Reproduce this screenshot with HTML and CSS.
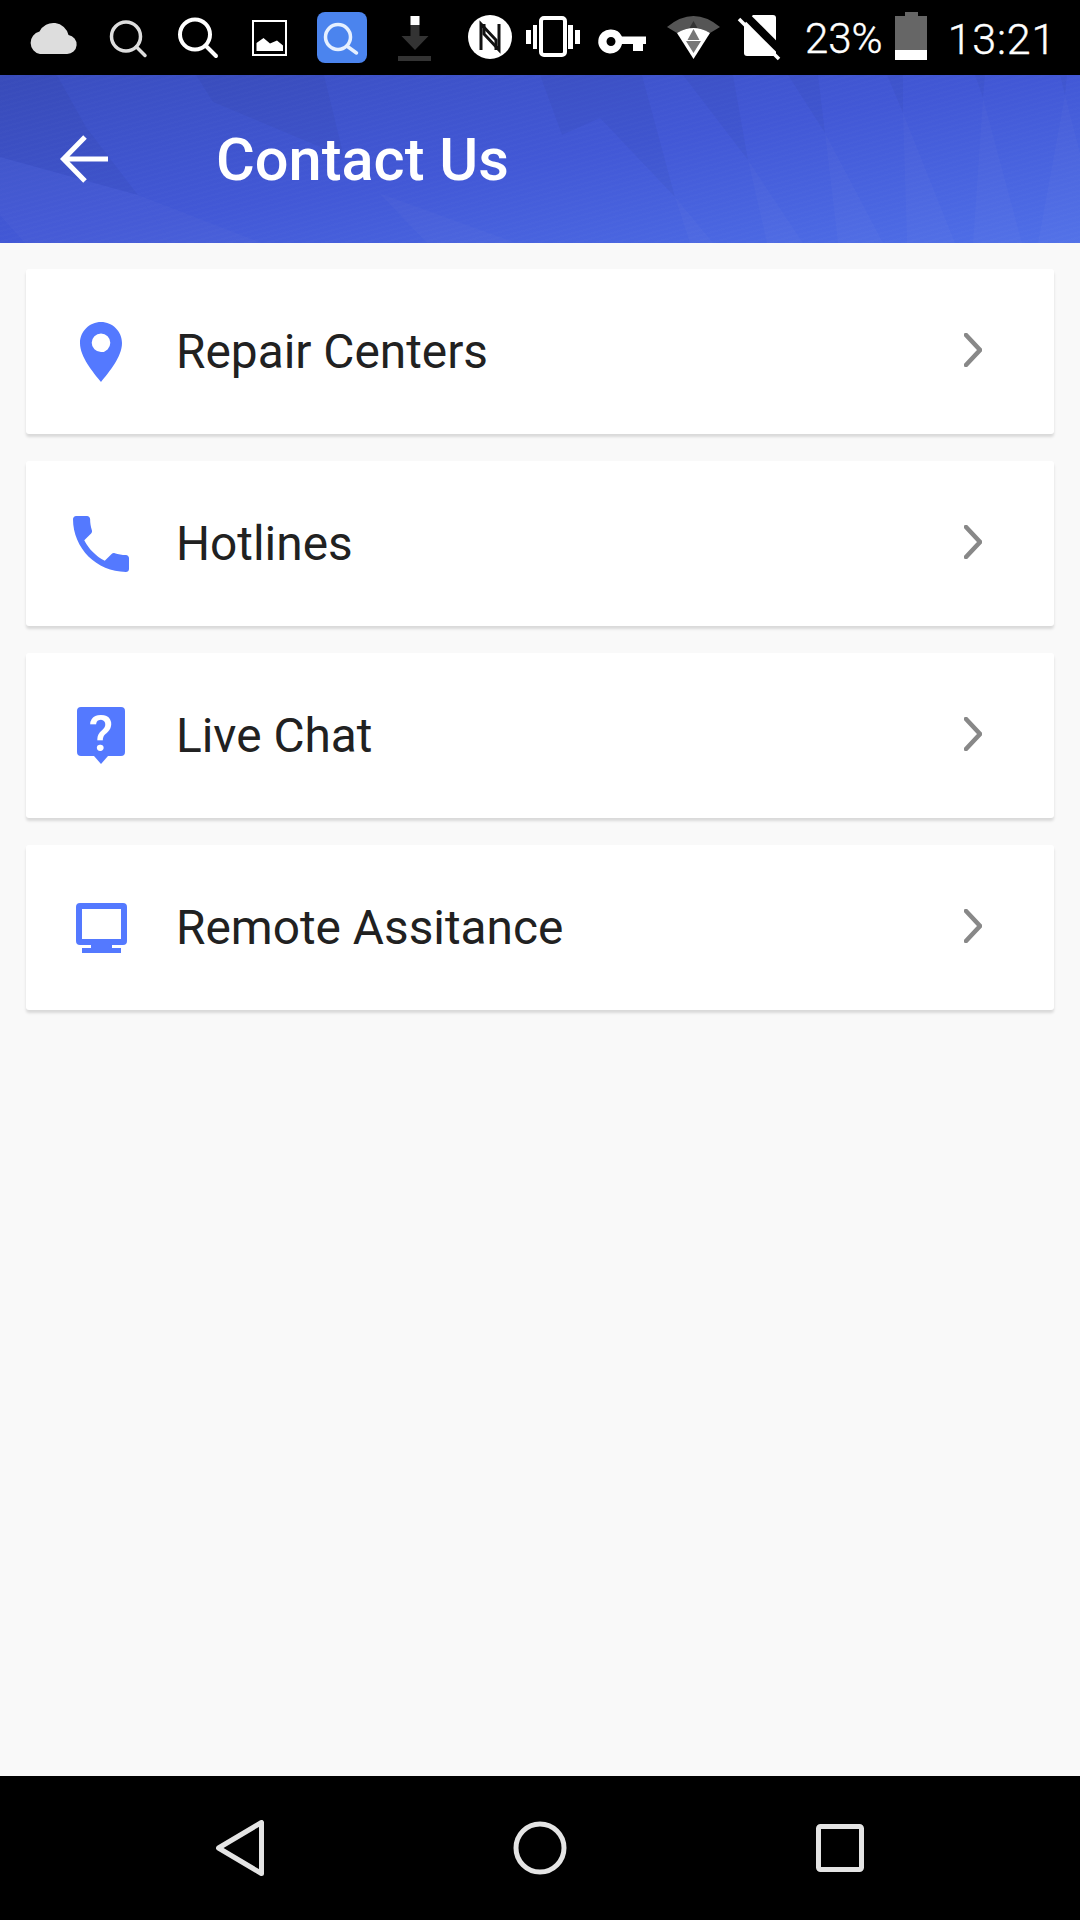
FILE: index.html
```html
<!DOCTYPE html>
<html lang="en">
<head>
<meta charset="utf-8">
<title>Contact Us</title>
<link rel="stylesheet" href="styles.css">
</head>
<body>
<div class="app">
  <div class="status-bar">
    <svg class="status-icons" width="800" height="75" viewBox="0 0 800 75" aria-hidden="true">
      <path fill="#ddd" d="M40 54h27a9.500 9.500 0 0 0 1.500-18.900A15.500 15.500 0 0 0 39.500 31.500 11.500 11.500 0 0 0 40 54z"/>
      <g fill="none" stroke="#ddd" stroke-width="3.500" stroke-linecap="round">
        <circle cx="126" cy="36.500" r="14.500"/><path d="M136.500 47l8.500 8.500"/>
      </g>
      <g fill="none" stroke="#fff" stroke-width="4" stroke-linecap="round">
        <circle cx="195" cy="34.500" r="15"/><path d="M206 46l10 10"/>
      </g>
      <rect x="253" y="21" width="33" height="34" fill="none" stroke="#fff" stroke-width="2"/>
      <path fill="#fff" d="M256.500 43l7-5 6.500 5.500 7-3 6 5v5.500h-26.500z"/>
      <rect x="317" y="12" width="50" height="51" rx="8" fill="#4b84ee"/>
      <g fill="none" stroke="#e6f0ff" stroke-width="3.500" stroke-linecap="round">
        <circle cx="338" cy="37" r="12.500"/><path d="M347.500 46.500l9 6.500"/>
      </g>
      <rect x="410.500" y="16" width="9" height="9" fill="#fff"/>
      <path fill="#333" d="M410.500 25h9v11h9l-13.500 14-13.500-14h9zM398 56h33v5h-33z"/>
      <circle cx="490" cy="37" r="22" fill="#fff"/>
      <g fill="none" stroke="#111" stroke-width="3">
        <path d="M481 50V24l15 16v10"/>
        <path d="M499 24v26L484 34V24"/>
      </g>
      <path fill="#fff" d="M526 30h5v14h-5zM533 25h4v24h-4zM568 25h5v24h-5zM575 30h5v14h-5z"/>
      <rect x="541" y="18" width="24" height="37" rx="3" fill="none" stroke="#fff" stroke-width="4"/>
      <path fill="#fff" fill-rule="evenodd" d="M611 29.500a12 12 0 0 1 11 7H646v7.500h-3v7h-10v-7h-11a12 12 0 1 1-11-14.500zm0 7.500a4.500 4.500 0 1 0 0 9 4.500 4.500 0 0 0 0-9z"/>
      <path fill="#555" d="M667 27Q693.500 5 720 27L710 33Q693.500 23 677 33z"/>
      <path fill="#fff" d="M677 33Q693.500 23 710 33L693.500 59z"/>
      <path fill="#777" d="M693.500 29l6 11h-12zM686 41h15l-7.500 12z"/>
      <path fill="#333" d="M693.500 21l4 7h-8z"/>
      <path fill="#fff" d="M753 15h20a3 3 0 0 1 3 3v35a3 3 0 0 1-3 3h-26a3 3 0 0 1-3-3V24z"/>
      <path stroke="#000" stroke-width="8" d="M744 14l40 40"/>
      <path stroke="#fff" stroke-width="3.500" d="M739 19l40 40"/>
    </svg>
    <span class="status-percent">23%</span>
    <svg class="battery" width="32" height="48" viewBox="0 0 32 48" aria-hidden="true">
      <path fill="#666" d="M10 0h13v4h9v34H0V4h10z"/>
      <rect y="38" width="32" height="10" fill="#fff"/>
    </svg>
    <span class="status-time">13:21</span>
  </div>

  <header class="app-header">
    <svg class="header-art" width="1080" height="168" viewBox="0 0 1080 168" aria-hidden="true">
      <g fill="#fff" fill-opacity=".025">
        <path d="M0 82L138 120 172 168H25L0 140z"/>
        <path d="M138 120L172 168H262z"/>
        <path d="M379 118L427 168H516z"/>
        <path d="M675 122L690 168H713z"/>
        <path d="M748 85L767 168H803z"/>
        <path d="M825 58L838 168H883z"/>
        <path d="M903 38L907 168H955z"/>
        <path d="M983 23L973 168H1022z"/>
        <path d="M1065 20L1038 168H1080V78z"/>
      </g>
      <g fill="#000" fill-opacity=".03">
        <path d="M0 0H57L86 52 138 120 0 82z"/>
        <path d="M196 0H324L344 82 213 27z"/>
        <path d="M540 0H642L675 122 600 43 562 60z"/>
        <path d="M683 0H733L748 85z"/>
        <path d="M788 0H818L825 58z"/>
        <path d="M887 0H903V38z"/>
        <path d="M975 0H985L983 23z"/>
        <path d="M1060 0H1067L1065 20z"/>
      </g>
    </svg>
    <button class="back-button" type="button" aria-label="Back">
      <svg width="48" height="48" viewBox="0 0 48 48" aria-hidden="true">
        <path fill="none" stroke="#fff" stroke-width="5" d="M48 24H4M25 2L3.500 24 25 46"/>
      </svg>
    </button>
    <h1 class="app-title">Contact Us</h1>
  </header>

  <main class="content">
    <a class="card">
      <svg class="card-icon" width="56" height="60" viewBox="0 0 56 60" aria-hidden="true">
        <path fill="#5479ff" fill-rule="evenodd" d="M28 0C16.400 0 7 9.400 7 21c0 14 13 29 21 39 8-10 21-25 21-39C49 9.400 39.600 0 28 0zm0 11.500a9.300 9.300 0 1 1 0 18.600 9.300 9.300 0 0 1 0-18.600z"/>
      </svg>
      <span class="card-label">Repair Centers</span>
      <svg class="chevron" width="18" height="34" viewBox="0 0 18 34" aria-hidden="true"><path d="M2 2l14 15L2 32"/></svg>
    </a>
    <a class="card">
      <svg class="card-icon" width="56" height="58" viewBox="3 3 18 18" aria-hidden="true">
        <path fill="#5479ff" d="M6.620 10.790c1.440 2.830 3.760 5.140 6.590 6.590l2.200-2.200c.27-.27.67-.36 1.020-.24 1.120.37 2.330.57 3.570.57.550 0 1 .45 1 1V20c0 .55-.45 1-1 1-9.390 0-17-7.610-17-17 0-.55.45-1 1-1h3.500c.55 0 1 .45 1 1 0 1.250.2 2.450.57 3.570.11.350.03.740-.25 1.020l-2.200 2.200z"/>
      </svg>
      <span class="card-label">Hotlines</span>
      <svg class="chevron" width="18" height="34" viewBox="0 0 18 34" aria-hidden="true"><path d="M2 2l14 15L2 32"/></svg>
    </a>
    <a class="card">
      <svg class="card-icon chat-icon" width="56" height="58" viewBox="0 0 56 58" aria-hidden="true">
        <path fill="#5479ff" d="M8 0h40a4 4 0 0 1 4 4v41a4 4 0 0 1-4 4H35l-7 8-7-8H8a4 4 0 0 1-4-4V4a4 4 0 0 1 4-4z"/>
        <text class="chat-mark" x="28" y="44" text-anchor="middle">?</text>
      </svg>
      <span class="card-label">Live Chat</span>
      <svg class="chevron" width="18" height="34" viewBox="0 0 18 34" aria-hidden="true"><path d="M2 2l14 15L2 32"/></svg>
    </a>
    <a class="card">
      <svg class="card-icon" width="56" height="50" viewBox="0 0 56 50" aria-hidden="true">
        <path fill="#5479ff" fill-rule="evenodd" d="M7 0h43a4 4 0 0 1 4 4v34a4 4 0 0 1-4 4H39v3h9v5H9v-5h9v-3H7a4 4 0 0 1-4-4V4a4 4 0 0 1 4-4zm2 6v30h39V6z"/>
      </svg>
      <span class="card-label">Remote Assitance</span>
      <svg class="chevron" width="18" height="34" viewBox="0 0 18 34" aria-hidden="true"><path d="M2 2l14 15L2 32"/></svg>
    </a>
  </main>

  <nav class="nav-bar" aria-label="System navigation">
    <svg width="48" height="56" viewBox="0 0 48 56" aria-hidden="true">
      <path class="nav-shape" d="M45.500 2.500v51L2.500 28z"/>
    </svg>
    <svg width="54" height="54" viewBox="0 0 54 54" aria-hidden="true">
      <circle class="nav-shape" cx="27" cy="27" r="24"/>
    </svg>
    <svg width="48" height="48" viewBox="0 0 48 48" aria-hidden="true">
      <rect class="nav-shape" x="2.500" y="2.500" width="43" height="43" rx="2"/>
    </svg>
  </nav>
</div>
</body>
</html>
```
FILE: styles.css
```css
* { box-sizing: border-box; }

html, body {
  margin: 0;
  padding: 0;
}

body {
  font-family: Roboto, "Liberation Sans", sans-serif;
  background: #f9f9f9;
}

.app {
  width: 1080px;
  height: 1920px;
  display: flex;
  flex-direction: column;
  overflow: hidden;
}

.status-bar {
  flex: 0 0 75px;
  display: flex;
  align-items: center;
  background: #000;
  color: #fff;
}

.status-icons {
  display: block;
  flex: 0 0 800px;
}

.status-percent,
.status-time {
  font-size: 42px;
  font-weight: 300;
  line-height: 72px;
  padding-top: 3px;
  white-space: nowrap;
  -webkit-text-stroke: .4px #fff;
}

.status-percent { margin-left: 5px; }

.battery {
  margin-left: 12px;
  margin-bottom: 3px;
}

.status-time {
  margin-left: 21px;
  font-size: 43px;
  letter-spacing: .8px;
}

.app-header {
  flex: 0 0 168px;
  position: relative;
  display: flex;
  align-items: center;
  padding-left: 60px;
  color: #fff;
  background:
    repeating-linear-gradient(165deg, rgba(255,255,255,.012) 0 2px, rgba(255,255,255,0) 2px 5px),
    linear-gradient(to bottom right, #3a4ec0 0%, #4258d6 50%, #4f6fe8 100%);
}

.header-art {
  position: absolute;
  left: 0;
  top: 0;
}

.back-button {
  position: relative;
  width: 48px;
  height: 48px;
  padding: 0;
  border: 0;
  background: none;
}

.back-button svg { display: block; }

.app-title {
  position: relative;
  margin: 4px 0 0 108px;
  font-size: 59.5px;
  font-weight: 500;
  line-height: 1;
}

.content {
  flex: 1;
  display: flex;
  flex-direction: column;
  gap: 27px;
  padding: 26px;
}

.card {
  height: 165px;
  display: flex;
  align-items: center;
  background: #fff;
  border-radius: 3px;
  box-shadow: 0 3px 3px rgba(0, 0, 0, .13);
}

.card-icon {
  flex: 0 0 56px;
  margin-left: 47px;
  margin-right: 47px;
}

.chat-icon { overflow: visible; }

.card-label {
  flex: 1;
  font-size: 47.8px;
  line-height: 1;
  color: #212121;
  margin-top: 2px;
}

.chat-mark {
  fill: #fff;
  font-family: Roboto, sans-serif;
  font-size: 50px;
  font-weight: 500;
}

.chevron {
  margin-right: 72px;
  margin-bottom: 4px;
}

.chevron path {
  fill: none;
  stroke: #888;
  stroke-width: 4.500;
  stroke-linecap: round;
}

.nav-bar {
  flex: 0 0 144px;
  display: grid;
  grid-template-columns: repeat(3, 300px);
  justify-content: center;
  justify-items: center;
  align-items: center;
  background: #000;
}

.nav-shape {
  fill: none;
  stroke: #e4e4e4;
  stroke-width: 5;
  stroke-linejoin: round;
}
```
